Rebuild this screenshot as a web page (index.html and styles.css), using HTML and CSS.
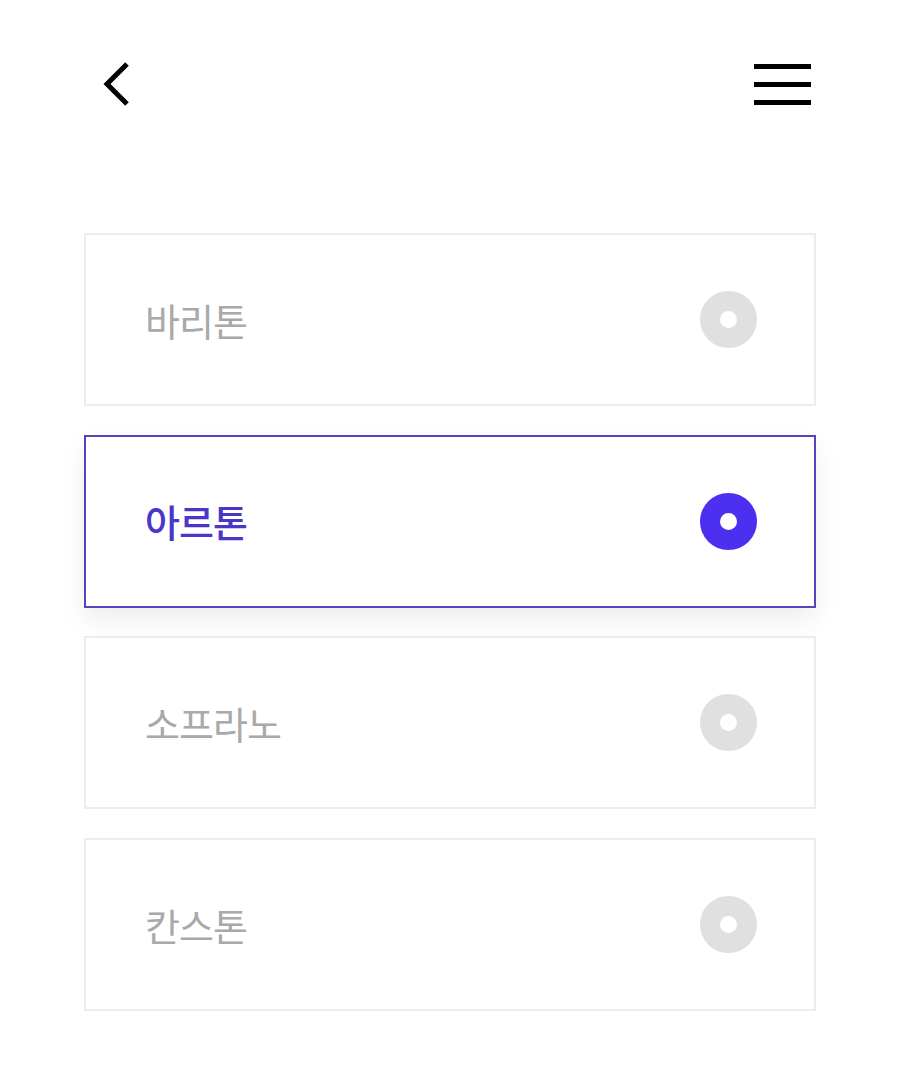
FILE: index.html
```html
<!DOCTYPE html>
<html>
    <head>
        <title>음역 선택</title>
        <meta charset="UTF-8">
        <link rel="stylesheet" href="styles.css">
    </head>
    <body>
        <div class="topo">
            <button class="botao-voltar">
                <svg width="32" height="44" viewBox="0 0 32 44"><path d="M26 2 L6 22 L26 42" fill="none" stroke="#000" stroke-width="5"/></svg>
            </button>
            <button class="botao-menu">
                <span></span><span></span><span></span>
            </button>
        </div>
        <div class="lista">
            <div class="opcao">
                <span class="nome">바리톤</span>
                <span class="radio"></span>
            </div>
            <div class="opcao selecionada">
                <span class="nome">아르톤</span>
                <span class="radio"></span>
            </div>
            <div class="opcao">
                <span class="nome">소프라노</span>
                <span class="radio"></span>
            </div>
            <div class="opcao">
                <span class="nome">칸스톤</span>
                <span class="radio"></span>
            </div>
        </div>
    </body>
</html>
```

FILE: styles.css
```css
* {
    margin: 0;
    padding: 0;
    box-sizing: border-box;
    font-family: "Noto Sans CJK KR", "Noto Sans", sans-serif;
}
body {
    background-color: #fff;
}
.topo {
    display: flex;
    justify-content: space-between;
    align-items: center;
    padding: 40px 89px 0 101px;
    height: 128px;
}
.topo button {
    border: none;
    background: none;
    display: flex;
}
.botao-menu {
    flex-direction: column;
    gap: 13px;
    width: 57px;
}
.botao-menu span {
    display: block;
    height: 5px;
    background-color: #000;
}
.lista {
    display: flex;
    flex-direction: column;
    gap: 28.7px;
    padding: 105px 84px 0 84px;
}
.opcao {
    display: flex;
    justify-content: space-between;
    align-items: center;
    height: 173px;
    border: 2px solid #ececec;
    padding: 0 57px 0 59px;
}
.nome {
    font-size: 38px;
    color: #a9a9a9;
    letter-spacing: -1px;
    line-height: 1;
}
.radio {
    width: 57px;
    height: 57px;
    border-radius: 50%;
    border: 20px solid #e0e0e0;
    background-color: #fff;
}
.selecionada {
    border-color: #5b41c0;
    box-shadow: 0 12px 24px rgba(0, 0, 0, 0.07);
}
.selecionada .nome {
    color: #4a36c9;
    font-weight: 500;
}
.selecionada .radio {
    border-color: #4d2ff0;
}
```
